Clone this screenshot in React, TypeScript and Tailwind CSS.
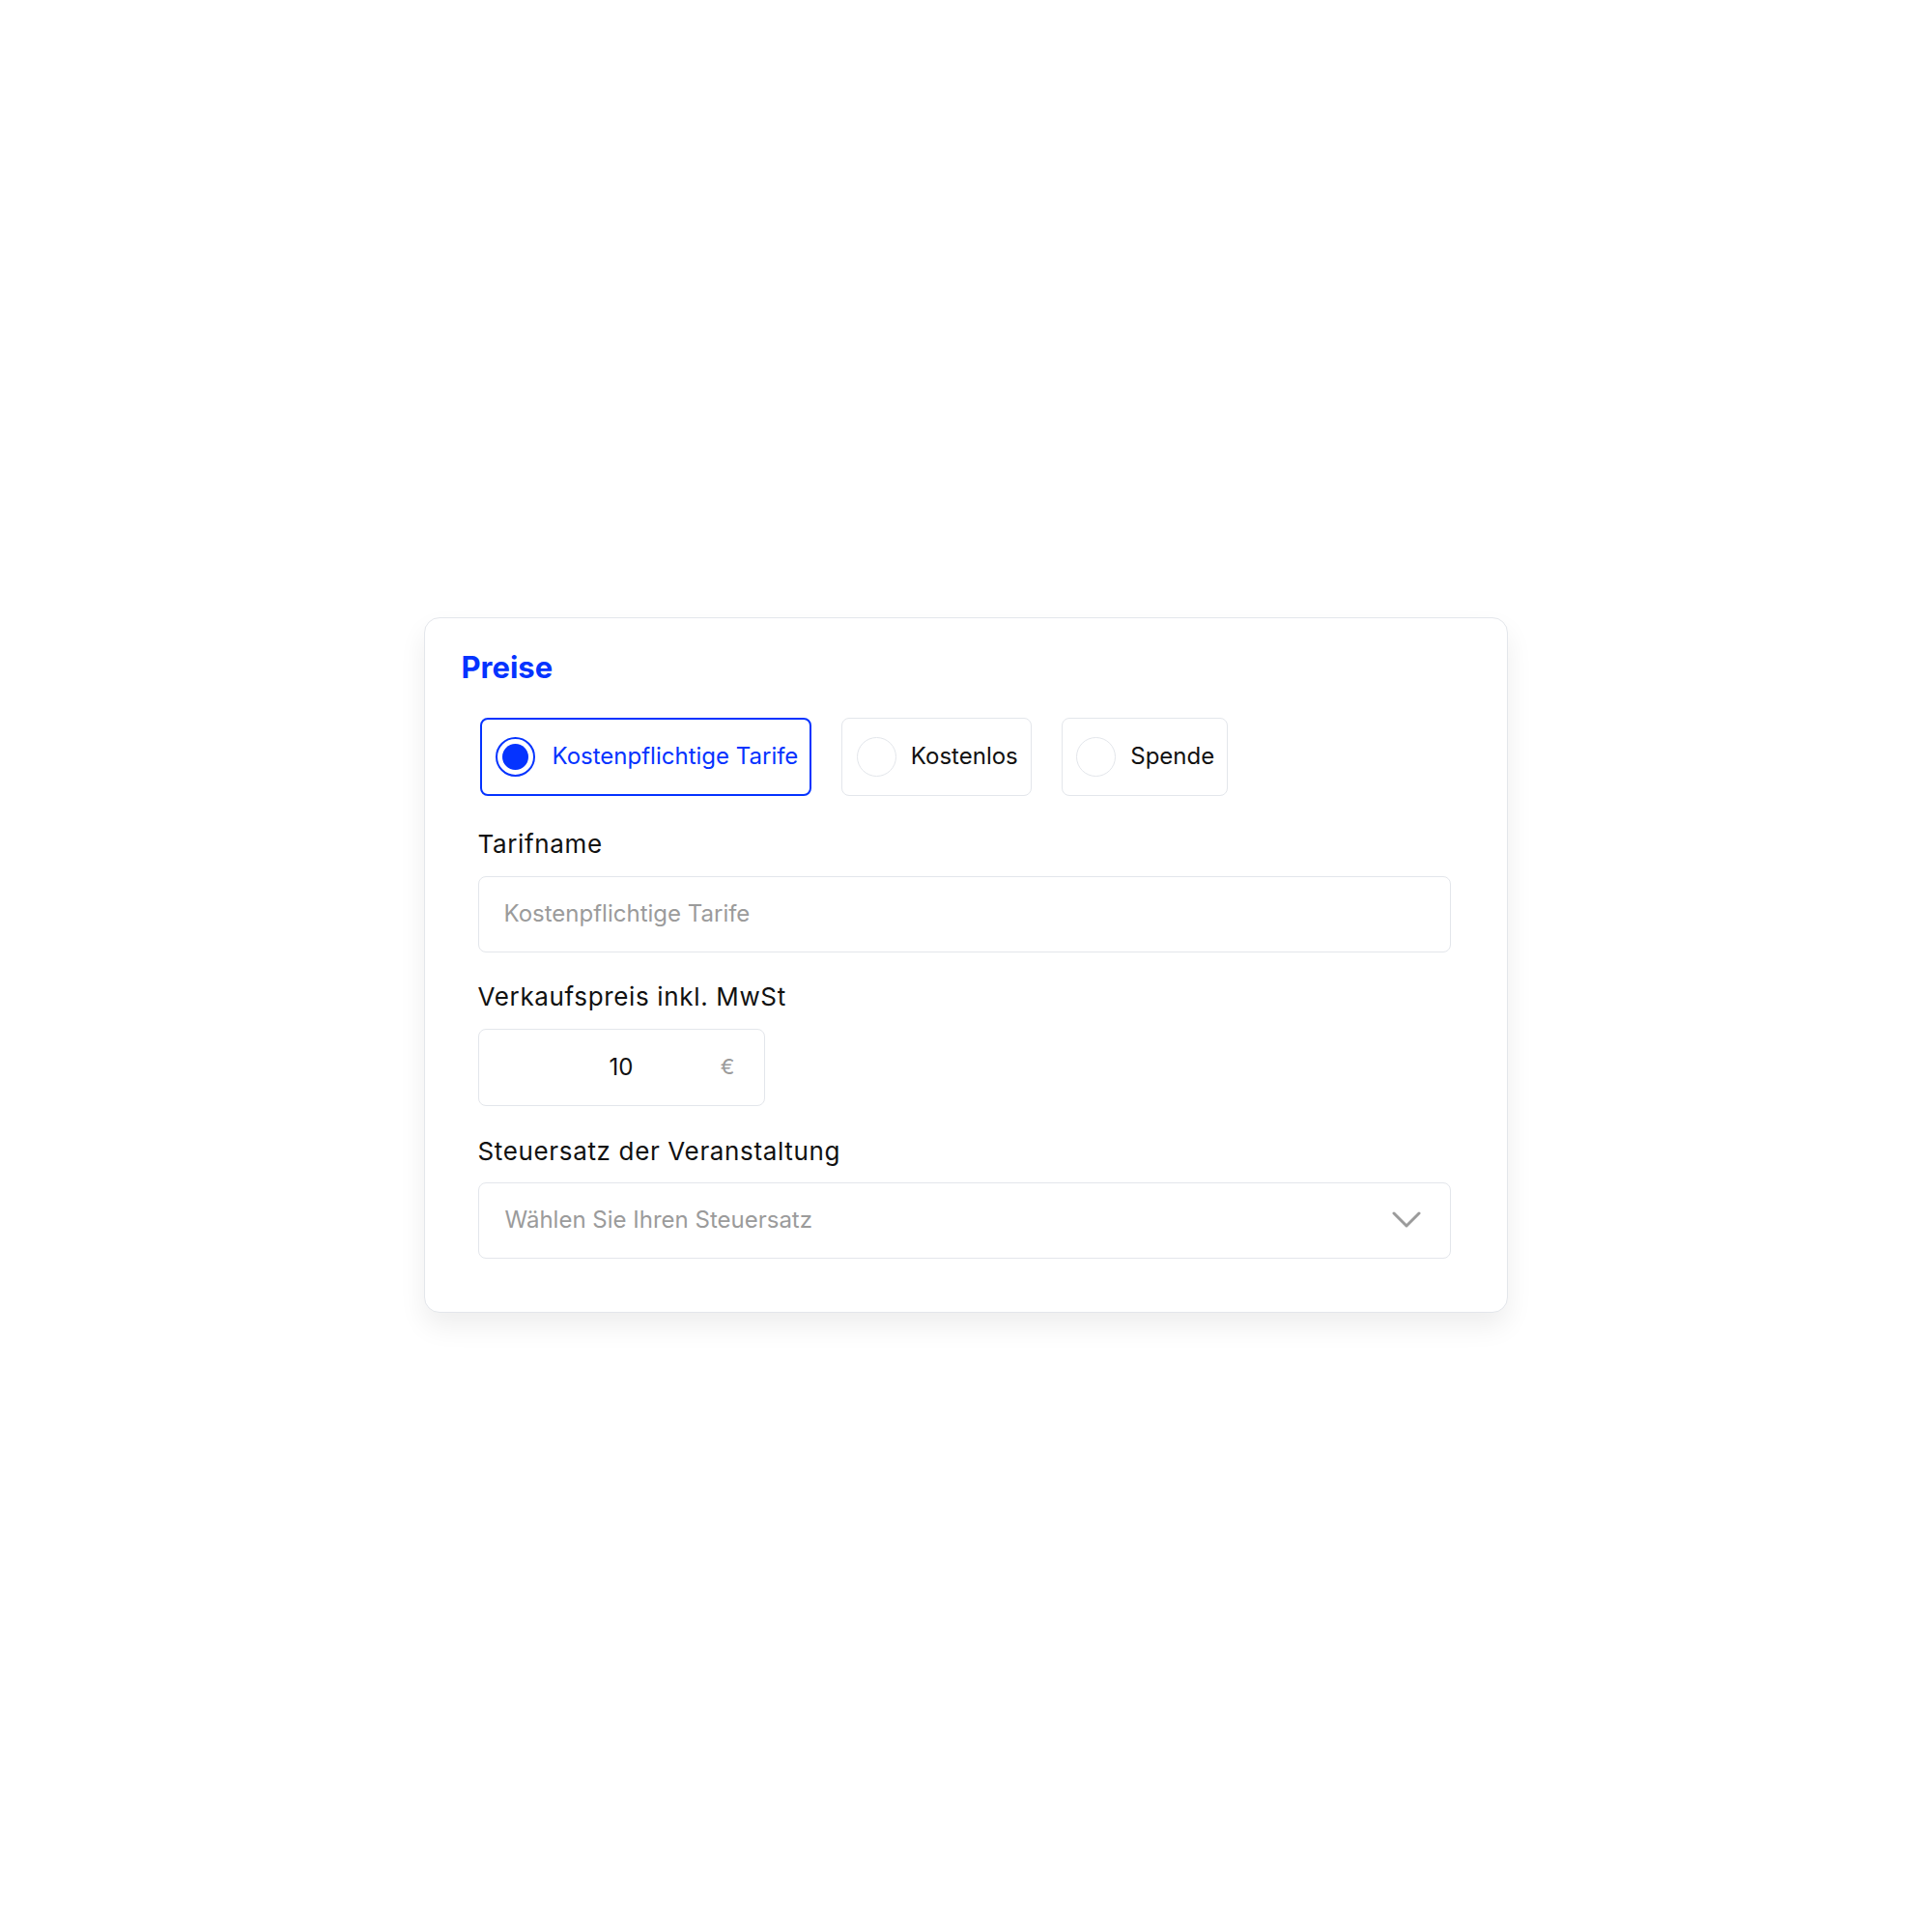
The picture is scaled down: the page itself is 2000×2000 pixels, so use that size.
import React from 'react';

type PriceOption = {
  id: string;
  label: string;
};

const options: PriceOption[] = [
  { id: 'paid', label: 'Kostenpflichtige Tarife' },
  { id: 'free', label: 'Kostenlos' },
  { id: 'donation', label: 'Spende' },
];

const RadioCard: React.FC<{ option: PriceOption; selected: boolean }> = ({ option, selected }) => {
  return (
    <div
      className={`box-border h-[81px] flex items-center rounded-[8px] bg-white ${
        selected ? 'border-2 border-[#0533ff] pl-[14px] pr-[12px]' : 'border-[1.5px] border-[#e3e6eb] pl-[14.5px] pr-[13px]'
      }`}
    >
      {selected ? (
        <span className="box-border w-[41px] h-[41px] rounded-full border-2 border-[#0533ff] flex items-center justify-center">
          <span className="w-[27px] h-[27px] rounded-full bg-[#0533ff]" />
        </span>
      ) : (
        <span className="box-border w-[41px] h-[41px] rounded-full border-[1.5px] border-[#e3e6eb]" />
      )}
      <span
        className={`text-[24px] leading-[32px] ${selected ? 'ml-[18px] text-[#0533ff]' : 'ml-[15px] text-[#111111]'}`}
      >
        {option.label}
      </span>
    </div>
  );
};

const FieldLabel: React.FC<{ children: React.ReactNode; className?: string }> = ({ children, className }) => (
  <p className={`text-[26px] leading-[32px] tracking-[0.025em] text-[#111111] ${className ?? ''}`}>{children}</p>
);

export default function App() {
  const selected = 'paid';

  return (
    <div
      className="w-full h-[2000px] flex items-center justify-center bg-white pb-[3px]"
      style={{ fontFamily: 'Inter, "Noto Sans", sans-serif' }}
    >
      <div className="box-border w-[1122px] bg-white border-[1.5px] border-[#e3e6eb] rounded-[16px] pt-[31px] pb-[55px] pl-[37.5px] pr-[58px] shadow-[0_14px_28px_rgba(0,0,0,0.07)]">
        <h2 className="text-[31px] leading-[40px] font-bold text-[#0533ff]">Preise</h2>

        <div className="pl-[17px]">
          <div className="mt-[32px] ml-[2px] flex gap-[31px]">
            {options.map((option) => (
              <RadioCard key={option.id} option={option} selected={option.id === selected} />
            ))}
          </div>

          <FieldLabel className="mt-[34px]">Tarifname</FieldLabel>
          <div className="box-border mt-[17px] h-[79px] w-full flex items-center pl-[26px] rounded-[8px] border-[1.5px] border-[#e3e6eb] bg-white">
            <span className="text-[24px] text-[#9b9b9b]">Kostenpflichtige Tarife</span>
          </div>

          <FieldLabel className="mt-[30px]">Verkaufspreis inkl. MwSt</FieldLabel>
          <div className="box-border relative mt-[17px] h-[80px] w-[297px] flex items-center justify-center rounded-[8px] border-[1.5px] border-[#e3e6eb] bg-white">
            <span className="text-[24px] text-[#111111]">10</span>
            <span className="absolute right-[30px] text-[22px] text-[#9b9b9b]">€</span>
          </div>

          <FieldLabel className="mt-[31px]">Steuersatz der Veranstaltung</FieldLabel>
          <div className="box-border mt-[16px] h-[79px] w-full flex items-center justify-between pl-[27px] pr-[30px] rounded-[8px] border-[1.5px] border-[#e3e6eb] bg-white">
            <span className="text-[24px] text-[#9b9b9b]">Wählen Sie Ihren Steuersatz</span>
            <svg width="30" height="18" viewBox="0 0 30 18" fill="none">
              <polyline
                points="2,2 15,15 28,2"
                stroke="#9b9b9b"
                strokeWidth="3"
                strokeLinecap="round"
                strokeLinejoin="round"
              />
            </svg>
          </div>
        </div>
      </div>
    </div>
  );
}
